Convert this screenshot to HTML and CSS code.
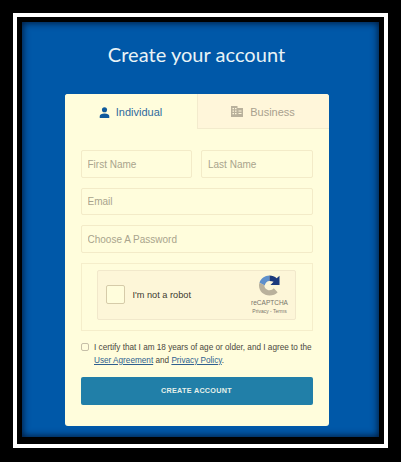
FILE: index.html
```html
<!DOCTYPE html>
<html>
	<head>
		<title>Create your account</title>
		<link rel="stylesheet" href="styles.css">
	</head>
	<body>
		<div class="frame">
			<div class="page">
				<h1 class="title">Create your account</h1>
				<div class="card">
					<div class="tabs">
						<div class="tab active">
							<svg class="tabIcon" viewBox="0 0 12 12" width="11" height="11"><circle cx="6" cy="3" r="2.8" fill="#0f5a9c"/><path d="M0.8 12V9.800C0.8 8 3 7 6 7s5.200 1 5.200 2.800V12z" fill="#0f5a9c"/></svg>
							<span>Individual</span>
						</div>
						<div class="tab">
							<svg class="tabIcon" viewBox="0 0 12 11" width="12" height="11"><path d="M0 0h6.500v2H12v9H0z" fill="#b9b19c"/><path d="M1.500 2h1.500v1.200H1.500zM4 2h1.500v1.200H4zM1.500 4.500h1.500v1.200H1.500zM4 4.500h1.500v1.200H4zM1.500 7h1.500v1.200H1.500zM4 7h1.500v1.200H4zM7.500 4.500h3v1h-3zM7.500 7h3v1h-3z" fill="#fff6da"/></svg>
							<span>Business</span>
						</div>
					</div>
					<form class="form">
						<div class="row">
							<input class="field" type="text" placeholder="First Name">
							<input class="field" type="text" placeholder="Last Name">
						</div>
						<input class="field emailField" type="text" placeholder="Email">
						<input class="field" type="password" placeholder="Choose A Password">
						<div class="captchaWrap">
							<div class="captcha">
								<div class="captchaBox"></div>
								<div class="captchaLabel">I'm not a robot</div>
								<div class="captchaLogo">
									<svg viewBox="0 0 22 22" width="21" height="21">
										<path d="M11 0.500C6 0.500 2 3.500 0.500 8l5.500 3C6.500 8 8.500 6.200 11 6.200z" fill="#5f90cb"/>
										<path d="M11 0.500c3 0 5.500 1 7.500 3L21.500 0.800V10.500H12l3.300-3.300C14 6.500 12.500 6.200 11 6.200z" fill="#1c3a7d"/>
										<path d="M0.500 8C0 9 0 10 0 11c0 6 5 10.500 11 10.500 3.500 0 6.500-1.300 8.500-3.500l-4-4c-1 1.300-2.600 2-4.500 2-3 0-5.500-2.500-5.500-5.500z" fill="#b9b19c"/>
									</svg>
									<div class="captchaName">reCAPTCHA</div>
									<div class="captchaLinks">Privacy - Terms</div>
								</div>
							</div>
						</div>
						<label class="agree">
							<span class="agreeBox"></span>
							<span class="agreeText">I certify that I am 18 years of age or older, and I agree to the <a href="#">User Agreement</a> and <a href="#">Privacy Policy</a>.</span>
						</label>
						<button class="submit" type="button">CREATE ACCOUNT</button>
					</form>
				</div>
			</div>
		</div>
	</body>
</html>
```

FILE: styles.css
```css
html, body { margin: 0; padding: 0; }
body {
	background-color: #000;
	width: 401px;
	height: 462px;
	overflow: hidden;
	font-family: "Liberation Sans", Arial, sans-serif;
}
.frame {
	box-sizing: border-box;
	width: 375px;
	height: 435px;
	margin: 13px 0 0 13px;
	border: 4.5px solid #fff;
	padding: 5px;
	background-color: #000;
}
.page {
	box-sizing: border-box;
	height: 415px;
	background-color: #0058a8;
	box-shadow: inset 0 0 7px 1px #001a3c;
	padding-left: 42.5px;
	padding-top: 20px;
}
.title {
	margin: 0;
	width: 264px;
	height: 51.5px;
	font-family: Lato, "Open Sans", sans-serif;
	font-weight: 400;
	font-size: 20px;
	line-height: 25px;
	letter-spacing: 0.03px;
	text-align: center;
	color: #e9f3f6;
}
.card {
	width: 264px;
	height: 332px;
	background-color: #fffddc;
	border-radius: 3px;
	overflow: hidden;
}
.tabs { display: flex; height: 35px; }
.tab {
	flex: 1;
	display: flex;
	align-items: center;
	justify-content: center;
	gap: 7px;
	padding-top: 2px;
	font-size: 11px;
	color: #a9a18e;
	background-color: #fff6da;
	border-bottom: 1px solid #f3ebcd;
	box-sizing: border-box;
}
.tab.active {
	flex: none;
	width: 133px;
	gap: 6px;
	color: #2f6a9d;
	background-color: #fffddc;
	border-bottom: 0;
	border-right: 1px solid #f3ebcd;
}
.form {
	display: flex;
	flex-direction: column;
	gap: 10px;
	padding: 21px 16px 0;
}
.row { display: flex; gap: 9px; }
.row .field { flex: 1; min-width: 0; }
.field {
	box-sizing: border-box;
	height: 28px;
	width: 100%;
	padding: 1px 6px 0;
	margin: 0;
	border: 1px solid #f3ebc8;
	border-radius: 2px;
	background-color: #fffddc;
	font-family: "Liberation Sans", Arial, sans-serif;
	font-size: 10px;
}
.emailField { height: 27px; }
.field::placeholder { color: #a9a48c; opacity: 1; }
.captchaWrap {
	box-sizing: border-box;
	height: 68px;
	border: 1px solid #f5eecb;
	padding: 6px 15px;
}
.captcha {
	box-sizing: border-box;
	display: flex;
	align-items: center;
	width: 199px;
	height: 50px;
	padding: 0 3px 0 8px;
	background-color: #fdf6d8;
	border: 1px solid #f1e8cb;
	border-radius: 2px;
}
.captchaBox {
	box-sizing: border-box;
	width: 19px;
	height: 19px;
	border: 1.5px solid #d6cba9;
	border-radius: 2px;
	background-color: #fffddc;
}
.captchaLabel {
	flex: 1;
	margin-left: 8px;
	font-size: 9.200px;
	color: #3c3a30;
}
.captchaLogo {
	display: flex;
	flex-direction: column;
	align-items: center;
	width: 42px;
	padding-right: 1px;
}
.captchaName { margin-top: 2px; font-size: 6.500px; line-height: 9px; color: #77746a; }
.captchaLinks { margin-top: 0; font-size: 5px; line-height: 8px; color: #77746a; }
.agree {
	display: flex;
	gap: 5.500px;
	font-size: 8.200px;
	line-height: 13px;
	color: #4a483e;
}
.agreeBox {
	box-sizing: border-box;
	flex: none;
	width: 8px;
	height: 8px;
	margin-top: 2px;
	border: 1px solid #c6bfa8;
	border-radius: 2px;
}
.agreeText a { color: #2f5f8f; }
.submit {
	height: 28px;
	padding: 0;
	border: 0;
	border-radius: 2px;
	background-color: #217fa8;
	color: #e6f1ea;
	font-family: "Liberation Sans", Arial, sans-serif;
	font-size: 7.200px;
	font-weight: bold;
	letter-spacing: 0.3px;
}
```
